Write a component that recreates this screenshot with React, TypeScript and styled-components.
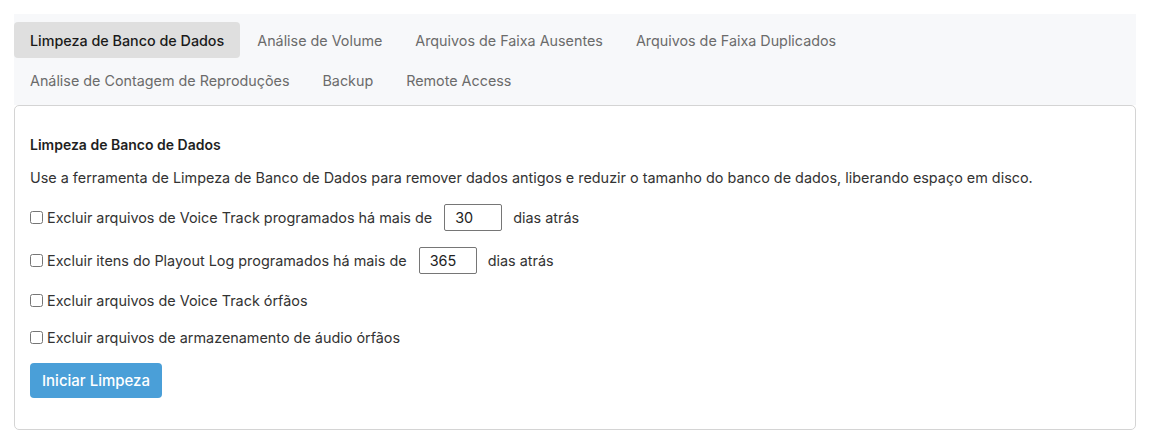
import styled, { createGlobalStyle } from 'styled-components';

const GlobalStyle = createGlobalStyle`
  body {
    margin: 0;
    background: #ffffff;
    font-family: Inter, "Noto Sans", sans-serif;
    color: #333333;
  }
`;

const Page = styled.div`
  padding: 14px 14px 0 14px;
`;

const TabBar = styled.div`
  display: flex;
  flex-wrap: wrap;
  row-gap: 4px;
  column-gap: 1px;
  padding: 8px 0 7px 0;
  background: #f7f8fa;
`;

const Tab = styled.button<{ $active?: boolean }>`
  height: 36px;
  padding: 0 16px;
  border: none;
  border-radius: 4px;
  background: ${(p) => (p.$active ? '#dfdfdf' : 'transparent')};
  color: ${(p) => (p.$active ? '#1a1a1a' : '#6b6b6b')};
  font-family: inherit;
  font-size: 14.33px;
  font-weight: ${(p) => (p.$active ? 500 : 400)};
  cursor: pointer;
`;

const Panel = styled.div`
  border: 1px solid #d4d4d4;
  border-radius: 5px;
  padding: 30px 15px 31px 15px;
`;

const Heading = styled.h3`
  margin: 0 0 14px 0;
  font-size: 14px;
  font-weight: 600;
  color: #1f1f1f;
`;

const Description = styled.p`
  margin: 0 0 7px 0;
  font-size: 14.4px;
  line-height: 22px;
  color: #333333;
`;

const OptionRow = styled.label<{ $tall?: boolean }>`
  display: flex;
  align-items: center;
  height: ${(p) => (p.$tall ? '43px' : '37px')};
  font-size: 14.4px;
  color: #333333;
`;

const Check = styled.input`
  width: 13px;
  height: 13px;
  margin: 0 4px 0 0;
`;

const DaysInput = styled.input`
  box-sizing: border-box;
  width: 58px;
  height: 27px;
  margin: 0 11px 0 12px;
  padding: 0 10px;
  border: 1px solid #767676;
  border-radius: 2px;
  font-family: inherit;
  font-size: 14.4px;
  color: #222222;
`;

const StartButton = styled.button`
  margin-top: 7px;
  height: 35px;
  padding: 0 12px;
  border: none;
  border-radius: 4px;
  background: #4a9fd8;
  color: #ffffff;
  font-family: inherit;
  font-size: 15px;
  font-weight: 500;
  cursor: pointer;
`;

const tabs = [
  'Limpeza de Banco de Dados',
  'Análise de Volume',
  'Arquivos de Faixa Ausentes',
  'Arquivos de Faixa Duplicados',
  'Análise de Contagem de Reproduções',
  'Backup',
  'Remote Access',
];

const App = () => (
  <Page>
    <GlobalStyle />
    <TabBar>
      {tabs.map((t, i) => (
        <Tab key={t} $active={i === 0}>{t}</Tab>
      ))}
    </TabBar>
    <Panel>
      <Heading>Limpeza de Banco de Dados</Heading>
      <Description>
        Use a ferramenta de Limpeza de Banco de Dados para remover dados antigos e reduzir o tamanho do banco de dados, liberando espaço em disco.
      </Description>
      <OptionRow $tall>
        <Check type="checkbox" />
        Excluir arquivos de Voice Track programados há mais de
        <DaysInput defaultValue="30" />
        dias atrás
      </OptionRow>
      <OptionRow $tall>
        <Check type="checkbox" />
        Excluir itens do Playout Log programados há mais de
        <DaysInput defaultValue="365" />
        dias atrás
      </OptionRow>
      <OptionRow>
        <Check type="checkbox" />
        Excluir arquivos de Voice Track órfãos
      </OptionRow>
      <OptionRow>
        <Check type="checkbox" />
        Excluir arquivos de armazenamento de áudio órfãos
      </OptionRow>
      <StartButton>Iniciar Limpeza</StartButton>
    </Panel>
  </Page>
);

export default App;
